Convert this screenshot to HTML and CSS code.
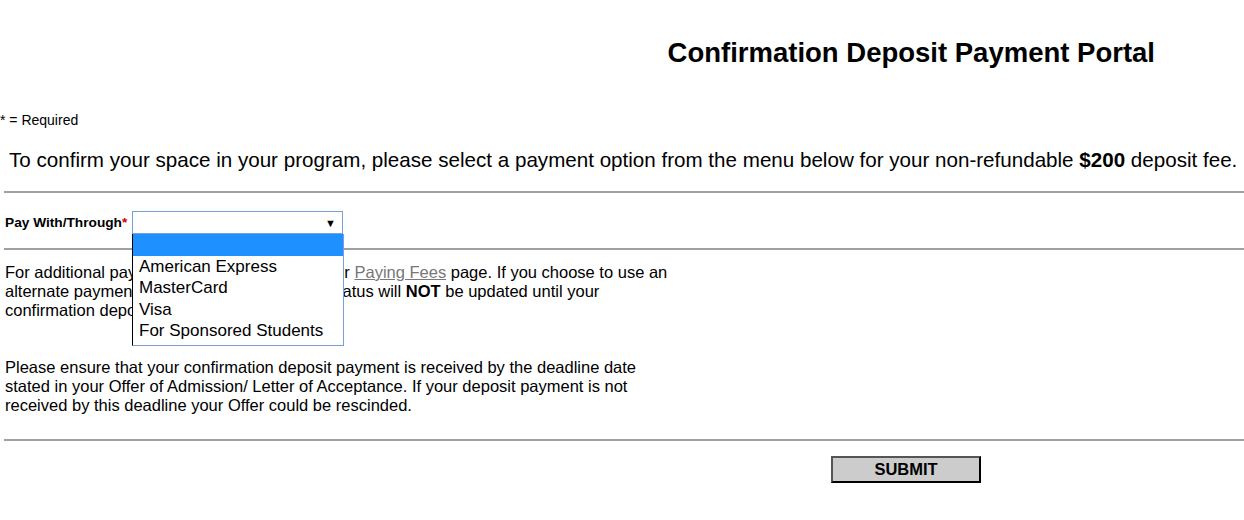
FILE: index.html
```html
<!DOCTYPE html>
<html>
<head>
<meta charset="utf-8">
<link rel="stylesheet" href="styles.css">
</head>
<body>
<div class="page">
  <div class="top">
    <h1 class="title">Confirmation Deposit Payment Portal</h1>
  </div>
  <div class="req">* = Required</div>
  <p class="intro">To confirm your space in your program, please select a payment option from the menu below for your non-refundable <b>$200</b> deposit fee.</p>
  <hr class="rule">
  <div class="field">
    <label class="label">Pay With/Through<span class="star">*</span></label>
    <div class="selectwrap">
      <div class="select"><span class="arrow">&#9660;</span></div>
      <ul class="menu">
        <li class="opt sel">&nbsp;</li>
        <li class="opt">American Express</li>
        <li class="opt">MasterCard</li>
        <li class="opt">Visa</li>
        <li class="opt">For Sponsored Students</li>
      </ul>
    </div>
  </div>
  <hr class="rule rule-tight">
  <div class="body">
    <p class="para">For additional payment options, please visit our <a class="link" href="#">Paying Fees</a> page. If you choose to use an alternate payment method, your admissions status will <b>NOT</b> be updated until your confirmation deposit has been received.</p>
    <p class="para">Please ensure that your confirmation deposit payment is received by the deadline date stated in your Offer of Admission/ Letter of Acceptance. If your deposit payment is not received by this deadline your Offer could be rescinded.</p>
  </div>
  <hr class="rule">
  <div class="actions">
    <button class="submit" type="button">SUBMIT</button>
  </div>
</div>
</body>
</html>
```

FILE: styles.css
```css
html, body {
  margin: 0;
  padding: 0;
  background: #fff;
}
body {
  font-family: "Liberation Sans", Arial, sans-serif;
  color: #000;
}
.page {
  width: 1244px;
}
.top {
  display: flex;
  justify-content: flex-end;
  padding: 38px 89px 0 0;
}
.title {
  margin: 0;
  font-size: 27.5px;
  font-weight: bold;
  line-height: 30px;
}
.req {
  margin-top: 44px;
  font-size: 14px;
  line-height: 16px;
}
.intro {
  margin: 20px 0 0 9px;
  font-size: 20.6px;
  line-height: 24px;
  white-space: nowrap;
}
.rule {
  margin: 19px 0 0 4px;
  border: 0;
  border-top: 2px solid #a0a0a0;
  height: 0;
}
.rule-tight {
  margin-top: 14px;
}
.field {
  display: flex;
  align-items: center;
  padding: 18px 0 0 5px;
  height: 23px;
}
.label {
  font-size: 13.7px;
  font-weight: bold;
  width: 126px;
  white-space: nowrap;
}
.star {
  color: #d00000;
}
.selectwrap {
  position: relative;
  margin-left: 1px;
}
.select {
  width: 209px;
  height: 21px;
  border: 1px solid #7a9fd8;
  background: #fff;
  display: flex;
  justify-content: flex-end;
  align-items: center;
  box-sizing: content-box;
}
.arrow {
  font-size: 11px;
  margin-right: 6px;
}
.menu {
  position: absolute;
  left: 0;
  top: 23px;
  width: 210px;
  margin: 0;
  padding: 0 0 3px 0;
  list-style: none;
  background: #fff;
  border-left: 1px solid #000;
  border-right: 1px solid #7a9fd8;
  border-bottom: 1px solid #7a9fd8;
  z-index: 2;
}
.opt {
  font-size: 17px;
  line-height: 21.5px;
  padding-left: 6px;
  white-space: nowrap;
}
.opt.sel {
  background: #1e90ff;
}
.body {
  padding: 13px 0 0 5px;
}
.para {
  width: 670px;
  margin: 0 0 38px 0;
  font-size: 16.5px;
  line-height: 19px;
}
.link {
  color: #777;
  text-decoration: underline;
}
.body .para:last-child {
  margin-bottom: 24px;
}
.actions {
  display: flex;
  justify-content: flex-start;
  padding: 15px 0 0 831px;
}
.submit {
  width: 150px;
  height: 27px;
  background: #ccc;
  border: 2px solid;
  border-color: #555 #000 #000 #555;
  font-family: "Liberation Sans", Arial, sans-serif;
  font-size: 16.5px;
  font-weight: bold;
  padding: 0;
}
```
